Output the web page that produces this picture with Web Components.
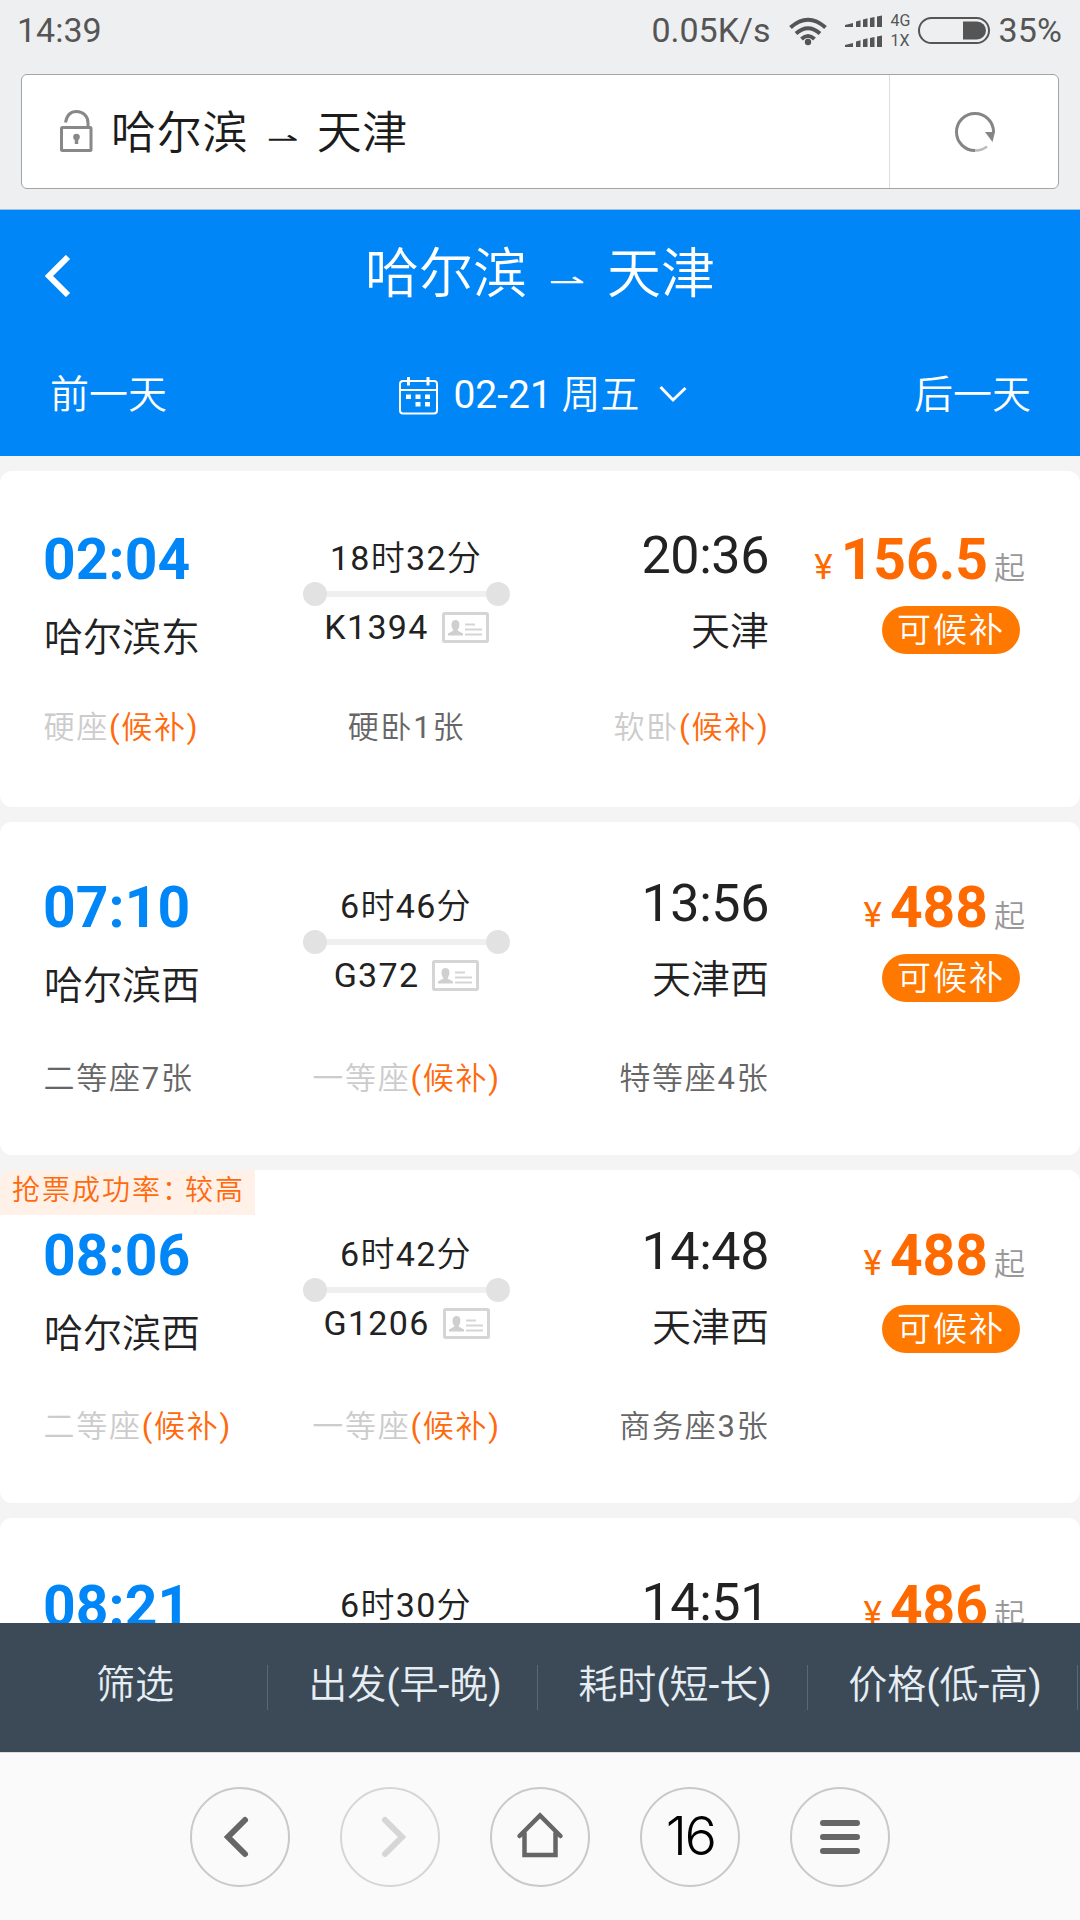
<!DOCTYPE html>
<html lang="zh-CN">
<head>
<meta charset="utf-8">
<meta name="viewport" content="width=1080">
<title>哈尔滨 ⇀ 天津</title>
<style>
html,body{margin:0;padding:0}
body{width:1080px;height:1920px;overflow:hidden;background:#f4f4f4;font-family:Roboto,"Noto Sans CJK SC DemiLight","Noto Sans CJK SC",sans-serif;color:#222}
</style>
</head>
<body>
<train-app></train-app>
<script>
const define = (name, css, html) => customElements.define(name, class extends HTMLElement {
  constructor() {
    super();
    const t = document.createElement('template');
    t.innerHTML = `<style>*{box-sizing:border-box}svg{display:block}${css}</style>` + (typeof html === 'function' ? html(this) : html);
    this.attachShadow({mode: 'open'}).appendChild(t.content.cloneNode(true));
  }
});

define('route-arrow', `
:host{display:inline-block}
span{display:block;font-family:"DejaVu Sans";transform:scaleY(.62);line-height:1}`,
`<span>⇀</span>`);

define('status-bar', `
:host{display:flex;height:61px;line-height:61px;font-size:34px;color:#555;padding:0 18px 0 17px;align-items:center}
.time{letter-spacing:0}
.r{margin-left:auto;display:flex;align-items:center}
.net{margin-right:18px}
.sim{display:flex;flex-direction:column;font-size:16px;line-height:20px;width:27px;margin-left:9px}
.pct{margin-left:9px;letter-spacing:.1px}`,
`<span class="time">14:39</span>
<div class="r"><span class="net">0.05K/s</span>
<svg width="38" height="30" viewBox="0 0 38 30" fill="none" stroke="#555" stroke-width="4"><path d="M1.5 11.500 Q19-4 36.500 11.500M7 17.500 Q19 7 31 17.500M12.500 23 Q19 17 25.500 23"/><circle cx="19" cy="26" r="3.200" fill="#555" stroke="none"/></svg>
<svg style="margin-left:18px" width="37" height="32" viewBox="0 0 37 32" fill="#555"><path d="M0 12V10L8 8V12ZM11 12V6.500L15.500 5.300V12ZM18 12V4.500L22.500 3.300V12ZM25 12V3L29.500 2V12ZM32 12V1.500L37 .5V12Z"/><path transform="translate(0 20)" d="M0 12V10L8 8V12ZM11 12V6.500L15.500 5.300V12ZM18 12V4.500L22.500 3.300V12ZM25 12V3L29.500 2V12ZM32 12V1.500L37 .5V12Z"/></svg>
<div class="sim"><span>4G</span><span>1X</span></div>
<svg width="72" height="27" viewBox="0 0 72 27"><rect x="1" y="1" width="70" height="25" rx="12.500" fill="none" stroke="#555" stroke-width="2"/><path d="M45 4.500H59a9 9 0 0 1 0 18H45Z" fill="#555"/></svg>
<span class="pct">35%</span></div>`);

define('address-bar', `
:host{display:flex;height:115px;margin:13px 21px 20px;border:1px solid #a2a4a5;border-radius:6px;background:#fff;color:#1c1c1c}
.a{flex:1;display:flex;align-items:center;padding-left:38px;border-right:1px solid #ddd;font-size:45px}
.a svg{margin-top:-2px}
.t{margin-left:18px;padding-bottom:4px;white-space:pre;font-size:45px;letter-spacing:.7px}
route-arrow{font-size:38px;margin:0 17px 0 19px;transform:translateY(3px)}
.b{width:168px;display:flex;align-items:center;justify-content:center;padding-left:2px}`,
`<div class="a"><svg width="33" height="42" viewBox="0 0 33 42" fill="none" stroke="#888" stroke-width="3"><rect x="1.500" y="17.500" width="29.500" height="23" rx="1"/><path d="M5.500 12.500C7 4 12 1.500 16.500 1.500C23 1.500 28 6 28 13V17"/><circle cx="16.500" cy="27" r="3.300" fill="#888" stroke="none"/><path d="M16.500 27V34" stroke-width="3.500"/></svg>
<span class="t">哈尔滨<route-arrow></route-arrow>天津</span></div>
<div class="b"><svg width="42" height="42" viewBox="0 0 42 42"><path d="M21 39.500A18.500 18.500 0 1 1 39.500 21" fill="none" stroke="#858585" stroke-width="3"/><path d="M21 39.500A18.500 18.500 0 0 0 33 35.500" fill="none" stroke="#bbb" stroke-width="2.500"/><path d="M31 21H41L38.500 31Z" fill="#858585"/></svg></div>`);

define('route-header', `
:host{display:block;height:247px;background:#0186f7;border-top:1px solid #9fc0d8;color:#fff}
.t{display:grid;grid-template-columns:200px 1fr 200px;align-items:center;height:125px;padding-left:45px;padding-right:45px}
.t b{font-weight:400;font-size:54px;text-align:center;line-height:125px;padding-top:2px;margin-bottom:-2px;white-space:nowrap}
route-arrow{font-size:44px;margin:0 22px 0 21px;transform:translateY(4px)}
.t svg{margin-top:7px}
.d{display:flex;justify-content:space-between;align-items:center;height:119px;font-size:39px;padding:0 49px 0 50px}
.d .x{padding-bottom:7px}
.m{display:flex;align-items:center;white-space:pre;margin-left:5px}
.m svg:first-child{margin-right:15px;margin-top:2px}
.m svg:last-child{margin-left:19px;margin-top:-2px}`,
`<div class="t"><svg width="26" height="42" viewBox="0 0 26 42" fill="none" stroke="#fff" stroke-width="6"><path d="M23 2L4 21L23 40"/></svg><b>哈尔滨<route-arrow></route-arrow>天津</b></div>
<div class="d"><span class="x">前一天</span><span class="m"><svg width="39" height="38" viewBox="0 0 39 38" fill="none" stroke="#fff" stroke-width="2"><rect x="1" y="4" width="37" height="32.500" rx="3"/><path d="M1 13H38"/><path d="M9.500 0V8.500M29 0V8.500" stroke-width="3"/><g fill="#fff" stroke="none"><path d="M7 17.500h5v4.500h-5zM16.500 17.500h5v4.500h-5zM26 17.500h5v4.500h-5zM16.500 25h5v4.500h-5zM26 25h5v4.500h-5z"/></g></svg><span class="x">02-21 周五</span><svg width="28" height="18" viewBox="0 0 28 18" fill="none" stroke="#fff" stroke-width="3"><path d="M1.500 2L14 15L26.500 3"/></svg></span><span class="x">后一天</span></div>`);

define('id-card', `:host{display:block}`,
`<svg width="47" height="31" viewBox="0 0 47 31"><rect x="1.500" y="1.500" width="44" height="28" rx="1" fill="#fff" stroke="#d5d5d5" stroke-width="3"/><path d="M6 23.500V21.500L11.500 18.500C8 13 9.500 8 13.500 8C17.500 8 19 13 15.500 18.500L21 21.500V23.500Z" fill="#cfcfcf"/><path d="M23 12.500H33M23 17.500H40M23 22.500H40" stroke="#d5d5d5" stroke-width="2"/></svg>`);

define('rush-tag', `:host{display:block;width:255px;height:45px;background:#fff0e8;color:#fe6a0c;font-size:28px;line-height:41px;padding-left:12px;letter-spacing:2px;white-space:nowrap}
i{font-style:normal;letter-spacing:-5px}`, `抢票成功率<i>：</i>较高`);

define('seat-info', `
:host{display:block;font-size:31px;line-height:40px;letter-spacing:1.75px;color:#666;white-space:nowrap}
:host([wait]) .n{color:#ccc}
.w{color:#fe6a0c}`,
el => `<span class="n"><slot></slot></span>${el.hasAttribute('wait') ? '<span class="w">(候补)</span>' : ''}`);

define('train-card', `
:host{display:flex;flex-direction:column;height:var(--h,333px);flex:none;background:#fff;border-radius:12px;position:relative;overflow:hidden}
rush-tag{position:absolute;left:0;top:0}
.top{display:flex;height:237px;padding:var(--s,0px) 54px 0 43px}
.c1{width:220px;padding-top:51px}
.dep{font-size:57px;font-weight:700;line-height:70px;color:#0186f7;letter-spacing:.1px}
.st{font-size:39px;line-height:50px}
.c1 .st{margin-top:18px;padding-left:1px}
.c2{width:287px;display:flex;flex-direction:column;align-items:center;padding:64px 0 0}
.c2>div{white-space:nowrap}
.dur,.no{font-size:34px;line-height:40px;letter-spacing:1.3px}
.dur{margin-left:-1px}
.line{width:207px;height:24px;margin:4px 0 1px;display:flex;align-items:center}
.line i{width:24px;height:24px;border-radius:50%;background:#e2e2e2}
.line u{flex:1;height:6px;background:#efefef}
.no{display:flex;align-items:center;gap:13px}
.c3{width:219px;padding-top:52px;text-align:right}
.arr{font-size:52px;line-height:60px;letter-spacing:-.4px}
.c3 .st{margin-top:21px}
.c4{flex:1;padding-top:51px;display:flex;flex-direction:column;align-items:flex-end}
.pr{display:flex;align-items:baseline;line-height:70px;height:70px;color:#ff6a00;white-space:nowrap;padding-right:1px}
.y{font-size:35px}
.p{font-size:57px;font-weight:700;margin-left:8px}
.q{font-size:31px;color:#999;margin-left:6px}
.bd{width:138px;height:48px;border-radius:24px;background:#ff7800;color:#fff;font-size:34px;line-height:49px;letter-spacing:2px;text-align:center;margin:var(--b,11px) 6px 0 0}
.seats{display:grid;grid-template-columns:220px 286px 220px;padding-left:43.5px}
.seats ::slotted(:nth-child(2)){text-align:center}
.seats ::slotted(:nth-child(3)){text-align:right}`,
el => { const a = n => el.getAttribute(n); const full = a('no'); return `${el.hasAttribute('tag') ? '<rush-tag></rush-tag>' : ''}
<div class="top">
<div class="c1"><div class="dep">${a('dep')}</div>${full ? `<div class="st">${a('from')}</div>` : ''}</div>
<div class="c2"><div class="dur">${a('dur')}</div>${full ? `<div class="line"><i></i><u></u><i></i></div><div class="no">${a('no')}<id-card></id-card></div>` : ''}</div>
<div class="c3"><div class="arr">${a('arr')}</div>${full ? `<div class="st">${a('to')}</div>` : ''}</div>
<div class="c4"><div class="pr"><span class="y">¥</span><span class="p">${a('price')}</span><span class="q">起</span></div>${full ? '<div class="bd">可候补</div>' : ''}</div>
</div><div class="seats"><slot></slot></div>`; });

define('filter-bar', `
:host{display:grid;grid-template-columns:repeat(4,270px);height:129px;background:#3b4a56;color:#e6edf3;font-size:39px;align-items:center}
div{height:45px;line-height:41px;text-align:center;border-right:1px solid #5b6873;margin-right:2px;padding-left:3px}`,
`<div>筛选</div><div>出发(早-晚)</div><div>耗时(短-长)</div><div>价格(低-高)</div>`);

define('round-button', `
:host{display:flex;width:100px;height:100px;border:2px solid #c9c9c9;border-radius:50%;align-items:center;justify-content:center;color:#000;font:350 54px/94px Inter,sans-serif;letter-spacing:-2.5px}
:host([off]){border-color:#d6d6d6}`, `<slot></slot>`);

define('browser-nav', `
:host{display:flex;height:168px;background:#fafafa;border-top:1px solid #ddd;justify-content:center;gap:50px;padding-top:34px}
svg{fill:none;stroke:#666;stroke-width:6;stroke-linecap:round}
span{padding-bottom:2px}`,
`<round-button><svg width="96" height="96" viewBox="0 0 96 96"><path d="M53 31L36 48L53 65"/></svg></round-button>
<round-button off><svg width="96" height="96" viewBox="0 0 96 96" style="stroke:#d6d6d6"><path d="M43 31L60 48L43 65"/></svg></round-button>
<round-button><svg width="96" height="96" viewBox="0 0 96 96" style="stroke-width:4.500"><path d="M27.500 47L48 26.500L68.500 47M32.500 44V66H63.500V44"/></svg></round-button>
<round-button><span>16</span></round-button>
<round-button><svg width="96" height="96" viewBox="0 0 96 96"><path d="M31 34H65M31 48H65M31 62H65"/></svg></round-button>`);

define('train-app', `
:host{display:flex;flex-direction:column;width:1080px;height:1920px;background:#eeeff1}
main{height:1167px;background:#f4f4f4;display:flex;flex-direction:column;gap:15px;padding-top:15px;overflow:hidden}
.l{--s:3px}.f{--h:336px}`,
`<status-bar></status-bar><address-bar></address-bar><route-header></route-header>
<main>
<train-card class="l f" dep="02:04" from="哈尔滨东" dur="18时32分" no="K1394" arr="20:36" to="天津" price="156.5"><seat-info wait>硬座</seat-info><seat-info>硬卧1张</seat-info><seat-info wait>软卧</seat-info></train-card>
<train-card dep="07:10" from="哈尔滨西" dur="6时46分" no="G372" arr="13:56" to="天津西" price="488"><seat-info>二等座7张</seat-info><seat-info wait>一等座</seat-info><seat-info>特等座4张</seat-info></train-card>
<train-card style="--b:14px" tag dep="08:06" from="哈尔滨西" dur="6时42分" no="G1206" arr="14:48" to="天津西" price="488"><seat-info wait>二等座</seat-info><seat-info wait>一等座</seat-info><seat-info>商务座3张</seat-info></train-card>
<train-card class="l" dep="08:21" dur="6时30分" arr="14:51" price="486"></train-card>
</main>
<filter-bar></filter-bar><browser-nav></browser-nav>`);
</script>
</body>
</html>
